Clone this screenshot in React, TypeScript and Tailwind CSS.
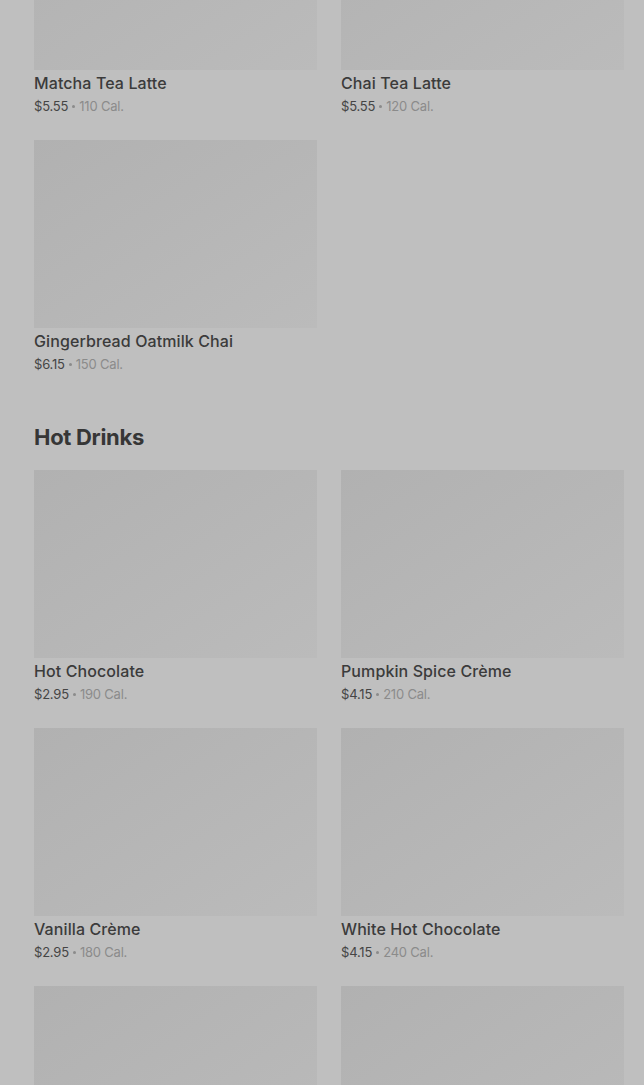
import React from "react";

type Item = { name: string; price: string; cal: string };

const topItems: Item[] = [
  { name: "Matcha Tea Latte", price: "$5.55", cal: "110 Cal." },
  { name: "Chai Tea Latte", price: "$5.55", cal: "120 Cal." },
  { name: "Gingerbread Oatmilk Chai", price: "$6.15", cal: "150 Cal." },
];

const hotItems: Item[] = [
  { name: "Hot Chocolate", price: "$2.95", cal: "190 Cal." },
  { name: "Pumpkin Spice Crème", price: "$4.15", cal: "210 Cal." },
  { name: "Vanilla Crème", price: "$2.95", cal: "180 Cal." },
  { name: "White Hot Chocolate", price: "$4.15", cal: "240 Cal." },
];

function Photo() {
  return <div className="h-[188px] w-full bg-linear-to-br from-[#b1b1b1] via-[#b6b6b6] to-[#bbbbbb]" />;
}

function Card({ item }: { item: Item }) {
  return (
    <div className="flex flex-col">
      <Photo />
      <div className="mt-[2px] text-[16px] leading-[22px] font-medium tracking-[0.1px] text-[#3b3b3b]">
        {item.name}
      </div>
      <div className="mt-[3px] flex h-[18px] items-center text-[13px] leading-[18px] tracking-[-0.2px] text-[#454545]">
        <span>{item.price}</span>
        <span className="mx-[4px] inline-block h-[3px] w-[3px] rounded-full bg-[#8b8b8b]" />
        <span className="text-[#8b8b8b]">{item.cal}</span>
      </div>
    </div>
  );
}

export default function App() {
  return (
    <div
      className="h-[1085px] w-full overflow-hidden bg-[#bfbfbf]"
      style={{ fontFamily: "Inter, 'Liberation Sans', sans-serif" }}
    >
      <div className="-mt-[118px] pl-[34px] pr-[20px]">
        <div className="grid grid-cols-2 gap-x-[24px] gap-y-[25px]">
          {topItems.map((it) => (
            <Card key={it.name} item={it} />
          ))}
        </div>
        <h2 className="mt-[50px] text-[22px] leading-[28px] font-bold tracking-[-0.3px] text-[#363636]">
          Hot Drinks
        </h2>
        <div className="mt-[19px] grid grid-cols-2 gap-x-[24px] gap-y-[25px]">
          {hotItems.map((it) => (
            <Card key={it.name} item={it} />
          ))}
          <Photo />
          <Photo />
        </div>
      </div>
    </div>
  );
}
